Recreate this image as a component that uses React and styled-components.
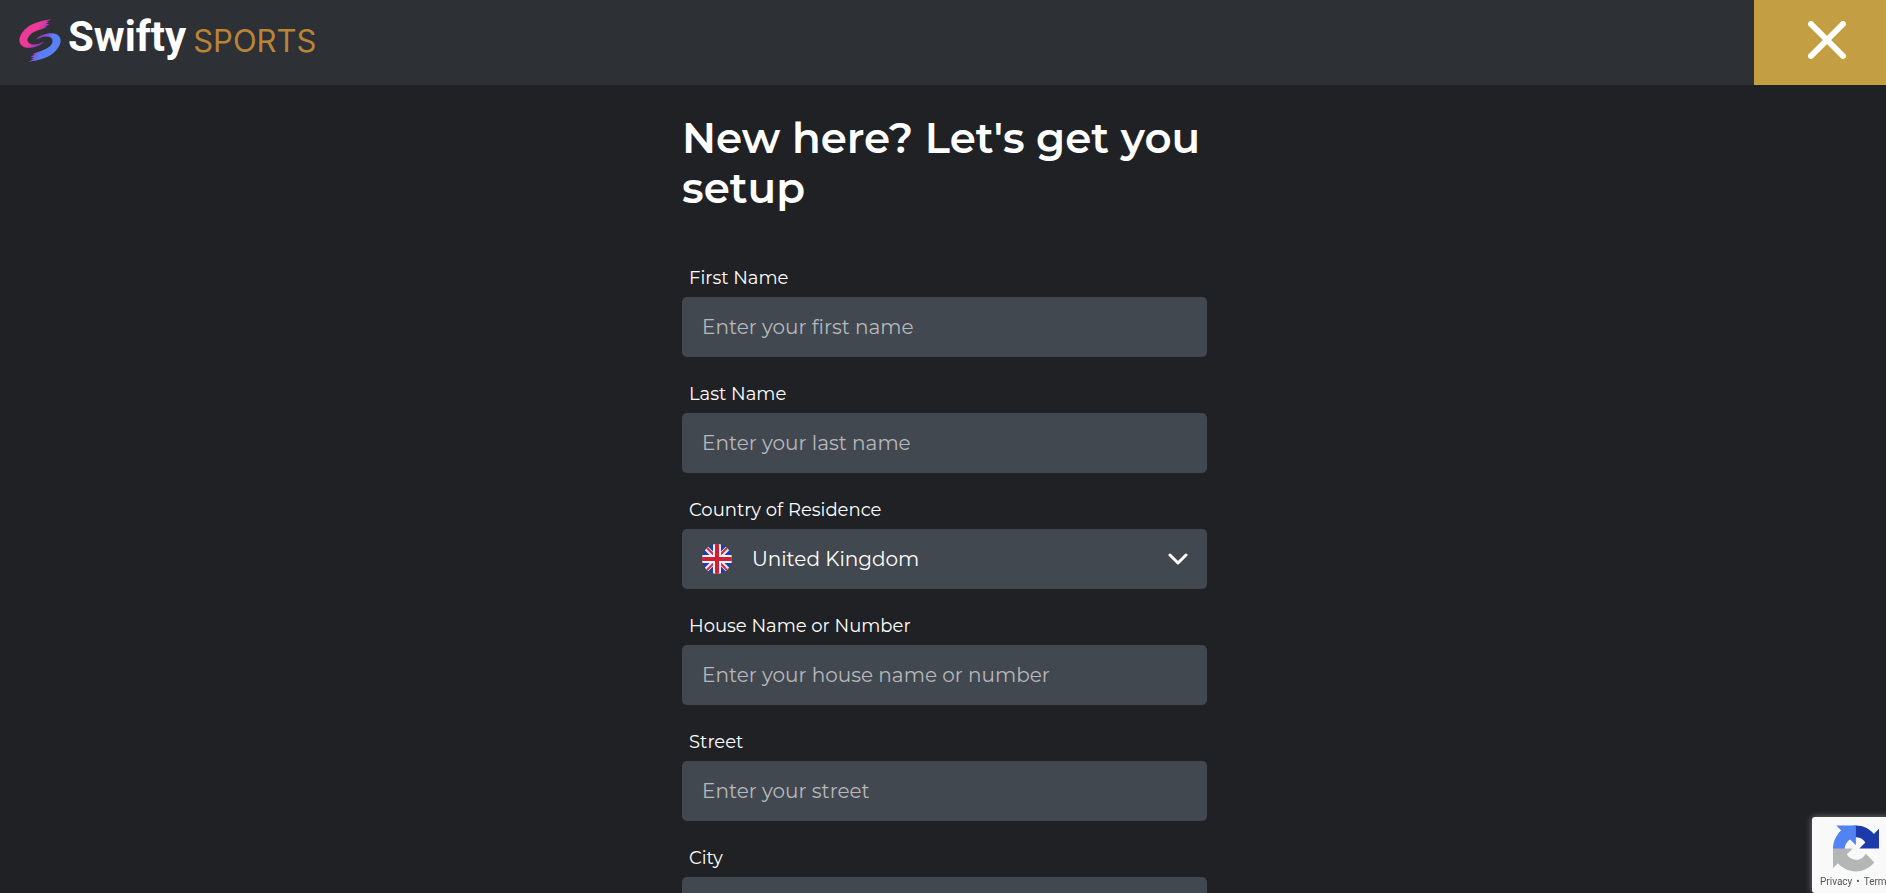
import React, { memo } from 'react';
import styled, { createGlobalStyle } from 'styled-components';

const GlobalStyle = createGlobalStyle`
    * {
        box-sizing: border-box;
    }

    body {
        margin: 0;
        background: #202124;
        color: #fff;
        font-family: Montserrat, Inter, sans-serif;
    }
`;

const Page = styled.div`
    height: 100vh;
    display: flex;
    flex-direction: column;
    overflow: hidden;
`;

const Header = styled.header`
    flex: none;
    height: 85px;
    display: flex;
    justify-content: space-between;
    background: #2d3035;
`;

const Brand = styled.a`
    display: flex;
    align-items: flex-start;
    padding: 12px 0 0 19px;
    color: #fff;
    text-decoration: none;

    svg {
        margin-top: 7px;
    }

    .name {
        margin-left: 7px;
        font: bold 42px/50px Roboto, sans-serif;
    }

    .product {
        margin-left: 7px;
        padding-top: 4px;
        font: 400 31px/50px Inter, sans-serif;
        color: #b88437;
    }
`;

const CloseButton = styled.button`
    width: 132px;
    display: flex;
    align-items: center;
    justify-content: center;
    padding: 0 0 6px 14px;
    border: 0;
    background: #c49e43;
    color: #fff;
    cursor: pointer;
`;

const Content = styled.main`
    flex: 1;
    min-height: 0;
    overflow-y: auto;
    scrollbar-width: none;
    padding: 28px 12px 0 15px;
`;

const Form = styled.form`
    max-width: 525px;
    margin: 0 auto;
`;

const Title = styled.h1`
    margin: 0 0 52px;
    font-size: 42px;
    font-weight: 600;
    line-height: 50px;
`;

const Field = styled.div`
    margin-bottom: 24px;
`;

const Label = styled.label`
    display: block;
    height: 32px;
    padding: 0 7px;
    font-size: 18px;
    line-height: 26px;
`;

const Input = styled.input`
    display: block;
    width: 100%;
    height: 60px;
    padding: 0 20px;
    border: 0;
    border-radius: 5px;
    background: #424850;
    color: #fff;
    font-family: inherit;
    font-size: 20px;

    &::placeholder {
        color: #b6b8bb;
        opacity: 1;
    }
`;

const SelectBox = styled.div`
    position: relative;

    /* icons sit on top of the native select */
    svg {
        position: absolute;
        top: 50%;
        transform: translateY(-50%);
        pointer-events: none;
    }

    .flag {
        left: 20px;
    }

    .arrow {
        right: 19px;
    }
`;

const Select = styled(Input)`
    appearance: none;
    padding: 0 60px 0 70px;
    cursor: pointer;
`;

const Captcha = styled.aside`
    position: fixed;
    right: -234px;
    bottom: 0;
    width: 308px;
    height: 76px;
    padding: 8px 0 0 8px;
    border-radius: 3px 0 0 3px;
    background: #f9f9f9;
    box-shadow: 0 0 6px #777;

    svg {
        display: block;
        margin-left: 13px;
    }

    nav {
        display: flex;
        gap: 4px;
        margin-top: 3px;
        font: 10px/14px Roboto, sans-serif;
        color: #555;
    }

    a {
        color: inherit;
        text-decoration: none;
    }
`;

const Swoosh = () => (
    <svg width="42" height="43" viewBox="27 27 126 130" aria-hidden="true">
        <defs>
            <linearGradient id="pink" gradientUnits="userSpaceOnUse" x1="56" y1="98" x2="78" y2="112">
                <stop offset="0" stopColor="#ec3a96" />
                <stop offset="1" stopColor="#9b37cf" />
            </linearGradient>
            <linearGradient id="blue" gradientUnits="userSpaceOnUse" x1="124" y1="86" x2="102" y2="72">
                <stop offset="0" stopColor="#5a80f7" />
                <stop offset="1" stopColor="#a238cd" />
            </linearGradient>
        </defs>
        <path
            fill="url(#pink)"
            d="M124 28 C99 31 70 38 51 53 C35 66 26 82 28 96 C31 111 48 117 67 113 C83 110 96 104 102 95 C91 101 77 106 65 104 C47 99 49 85 62 73 C76 61 98 59 113 50 L104 51 L119 42 L108 42 L118 36 L109 36 Z"
        />
        <path
            fill="url(#blue)"
            d="M56 156 C81 153 110 146 129 131 C145 118 154 102 152 88 C149 73 132 67 113 71 C97 74 84 80 78 89 C89 83 103 78 115 80 C133 85 131 99 118 111 C104 123 82 125 67 134 L76 133 L61 142 L72 142 L62 148 L71 148 Z"
        />
    </svg>
);

const CloseIcon = () => (
    <svg width="38" height="38" viewBox="0 0 38 38" fill="none" aria-hidden="true">
        <path d="M3 3 L35 35 M35 3 L3 35" stroke="currentColor" strokeWidth="6" strokeLinecap="round" />
    </svg>
);

const UkFlag = () => (
    <svg className="flag" width="30" height="30" viewBox="0 0 30 30" aria-hidden="true">
        <clipPath id="round">
            <circle cx="15" cy="15" r="15" />
        </clipPath>
        <g clipPath="url(#round)">
            <path fill="#1c3fa8" d="M0 0h30v30H0z" />
            <path stroke="#e8e8ec" strokeWidth="5" d="M2 2 L28 28 M28 2 L2 28" />
            <path stroke="#d8283f" strokeWidth="2" d="M4 3 L15 14 M26 3 L15 14 M15 16 L26 27 M15 16 L4 27" />
            <path stroke="#f0f0f0" strokeWidth="8" d="M15 0v30M0 15h30" />
            <path stroke="#cf1f36" strokeWidth="4" d="M15 0v30M0 15h30" />
        </g>
    </svg>
);

const Arrow = () => (
    <svg className="arrow" width="20" height="12" viewBox="0 0 20 12" fill="none" aria-hidden="true">
        <path d="M2 2 L10 10 L18 2" stroke="#fff" strokeWidth="3" strokeLinecap="round" strokeLinejoin="round" />
    </svg>
);

const CaptchaLogo = () => (
    <svg width="46" height="47" viewBox="0 0 64 64" aria-hidden="true">
        <path
            fill="#1c3aa9"
            d="M64 31.955l-.033-1.37V4.687l-7.16 7.16C50.948 4.674 42.033.093 32.05.093c-10.4 0-19.622 4.96-25.458 12.64l11.736 11.86a15.55 15.55 0 0 1 4.754-5.334c2.05-1.6 4.952-2.906 8.968-2.906.485 0 .86.057 1.135.163 4.976.393 9.288 3.14 11.828 7.124l-8.307 8.307L64 31.953"
        />
        <path
            fill="#5184f2"
            d="M31.862.094l-1.37.033H4.594l7.16 7.16C4.58 13.147 0 22.06 0 32.046c0 10.4 4.96 19.622 12.64 25.458L24.5 45.768a15.55 15.55 0 0 1-5.334-4.754c-1.6-2.05-2.906-4.952-2.906-8.968 0-.485.057-.86.163-1.135.393-4.976 3.14-9.288 7.124-11.828l8.307 8.307L31.86.095"
        />
        <path
            fill="#b4b6b5"
            d="M.001 32.045l.033 1.37v25.898l7.16-7.16c5.86 7.173 14.774 11.754 24.76 11.754 10.4 0 19.622-4.96 25.458-12.64l-11.736-11.86a15.55 15.55 0 0 1-4.754 5.334c-2.05 1.6-4.952 2.906-8.968 2.906-.485 0-.86-.057-1.135-.163-4.976-.393-9.288-3.14-11.828-7.124l8.307-8.307c-10.522.04-22.4.066-27.295-.005"
        />
    </svg>
);

const TextField = memo(({ id, label, placeholder }) => (
    <Field>
        <Label htmlFor={id}>{label}</Label>
        <Input id={id} name={id} type="text" placeholder={placeholder} />
    </Field>
));

const App = () => {
    return (
        <Page>
            <GlobalStyle />

            <Header>
                <Brand href="#">
                    <Swoosh />
                    <span className="name">Swifty</span>
                    <span className="product">SPORTS</span>
                </Brand>
                <CloseButton type="button" aria-label="Close">
                    <CloseIcon />
                </CloseButton>
            </Header>

            <Content>
                <Form>
                    <Title>New here? Let's get you setup</Title>

                    <TextField id="firstName" label="First Name" placeholder="Enter your first name" />
                    <TextField id="lastName" label="Last Name" placeholder="Enter your last name" />

                    <Field>
                        <Label htmlFor="country">Country of Residence</Label>
                        <SelectBox>
                            <Select as="select" id="country" name="country">
                                <option>United Kingdom</option>
                            </Select>
                            <UkFlag />
                            <Arrow />
                        </SelectBox>
                    </Field>

                    <TextField id="house" label="House Name or Number" placeholder="Enter your house name or number" />
                    <TextField id="street" label="Street" placeholder="Enter your street" />
                    <TextField id="city" label="City" placeholder="Enter your city" />
                </Form>
            </Content>

            <Captcha>
                <CaptchaLogo />
                <nav>
                    <a href="#">Privacy</a>
                    <span>•</span>
                    <a href="#">Terms</a>
                </nav>
            </Captcha>
        </Page>
    );
};

export default App;
